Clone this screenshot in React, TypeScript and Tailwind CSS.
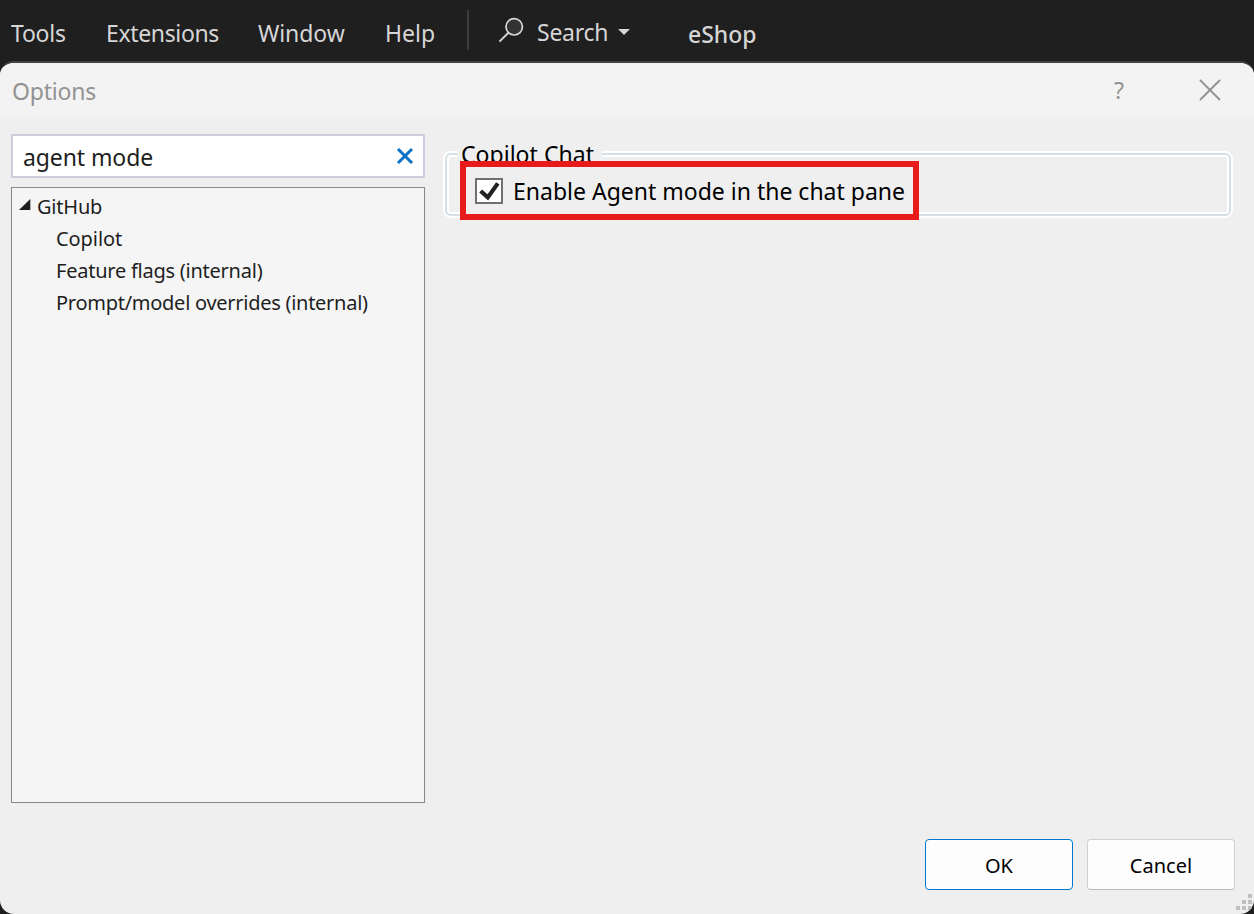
import { useState } from "react";

function SearchIcon() {
  return (
    <svg className="mt-[17px] ml-[30px] h-[26px] w-[26px] shrink-0" viewBox="0 0 26 26" fill="none">
      <circle cx="15.2" cy="9.8" r="8.2" fill="#333333" stroke="#d8d8d8" strokeWidth="1.7" />
      <path d="M9.4 15.8 L0.4 24.6" stroke="#d8d8d8" strokeWidth="1.9" />
    </svg>
  );
}

function MenuBar() {
  return (
    <header className="flex h-[61px] shrink-0 items-start whitespace-nowrap pl-[11px] text-[23px] leading-[32px] text-[#d6d6d6]">
      <span className="mt-[17px] w-[95px] tracking-[-0.24px]">Tools</span>
      <span className="mt-[17px] w-[152px] tracking-[-0.35px]">Extensions</span>
      <span className="mt-[17px] w-[127px] tracking-[-0.1px]">Window</span>
      <span className="mt-[17px] w-[82px] tracking-[0.05px]">Help</span>
      <span className="mt-[10px] h-[40px] w-[2px] bg-[#3d3d3d]" />
      <SearchIcon />
      <span className="mt-[16px] ml-[12px] w-[81px] tracking-[-0.25px]">Search</span>
      <svg className="mt-[29px] h-[6px] w-[12px]" viewBox="0 0 12 6">
        <path d="M0 0 H12 L6 6 Z" fill="#d6d6d6" />
      </svg>
      <span className="mt-[18px] ml-[58px] font-medium">eShop</span>
    </header>
  );
}

function TitleBar() {
  return (
    <div className="flex h-[56px] shrink-0 items-start bg-[#f3f3f3] pl-[12px] text-[23px] leading-[32px] text-[#929292]">
      <h1 className="mt-[12px] w-[1101px] tracking-[-0.2px]">Options</h1>
      <button className="mt-[11px] w-[12px] text-left" aria-label="Help">
        <span className="pl-px">?</span>
      </button>
      <button className="mt-[16px] ml-[74px]" aria-label="Close">
        <svg className="h-[22px] w-[22px]" viewBox="0 0 22 22" fill="none">
          <path d="M1 1 L21 21 M21 1 L1 21" stroke="#929292" strokeWidth="1.8" />
        </svg>
      </button>
    </div>
  );
}

function Sidebar() {
  return (
    <aside className="w-[414px] shrink-0 text-[#1e1e1e]">
      <div className="flex h-[44px] items-start justify-between border-2 border-[#ccccdc] bg-white pt-[5px] pl-[10px] pr-[9px]">
        <span className="text-[23px] leading-[32px] tracking-[-0.1px]">agent mode</span>
        <svg className="mt-[6px] h-[18px] w-[18px]" viewBox="0 0 18 18" fill="none">
          <path d="M2 2 L16 16 M16 2 L2 16" stroke="#0b71c7" strokeWidth="3" />
        </svg>
      </div>
      <div className="mt-[9px] h-[616px] border border-[#838991] bg-[#f5f5f5] pt-[3px] text-[20px] leading-[32px] whitespace-nowrap">
        <div className="flex pl-[7px]">
          <svg className="mt-[8px] mr-[6px] h-[11px] w-[12px]" viewBox="0 0 12 11">
            <path d="M11.3 0 V11 H0 Z" fill="#1e1e1e" />
          </svg>
          <span className="tracking-[-0.22px]">GitHub</span>
        </div>
        <div className="pl-[44px] tracking-[-0.08px]">Copilot</div>
        <div className="pl-[44px] tracking-[-0.24px]">Feature flags (internal)</div>
        <div className="pl-[44px] tracking-[-0.27px]">Prompt/model overrides (internal)</div>
      </div>
    </aside>
  );
}

function OptionsGroup() {
  const [enabled, setEnabled] = useState(true);
  return (
    <section className="relative mt-[17px] ml-[18px] h-[67px] w-[790px] rounded-[8px] border-2 border-white">
      <div className="h-full rounded-[6px] border-2 border-[#d5dfe5]">
        <div className="h-full rounded-[4px] border-2 border-white" />
      </div>
      <h2 className="absolute top-[-15px] left-[12px] h-[32px] w-[145px] bg-[#efefef] pl-[4px] text-[23px] leading-[32px] tracking-[0.03px] whitespace-nowrap text-black">
        Copilot Chat
      </h2>
      <label className="absolute top-[8px] left-[15px] flex h-[59px] w-[459px] items-start border-6 border-[#e81b1b] bg-[#efefef] text-[23px] leading-[32px] whitespace-nowrap text-black">
        <input
          type="checkbox"
          className="peer sr-only"
          checked={enabled}
          onChange={(e) => setEnabled(e.target.checked)}
        />
        <span className="mt-[11px] ml-[9px] h-[26px] w-[28px] shrink-0 border-2 border-[#707070] bg-white">
          {enabled && (
            <svg className="h-[22px] w-[24px]" viewBox="0 0 24 22" fill="none">
              <path d="M3.6 11 L10.8 17.4 L20.8 3.4" stroke="#212121" strokeWidth="4.2" />
            </svg>
          )}
        </span>
        <span className="mt-[8px] ml-[9px] pl-px">Enable Agent mode in the chat pane</span>
      </label>
    </section>
  );
}

function ResizeGrip() {
  return (
    <svg className="absolute right-[2px] bottom-[4px] h-[16px] w-[16px]" viewBox="0 0 16 16" fill="#bfbfbf">
      <path d="M12 0h4v4h-4z M6 6h4v4h-4z M12 6h4v4h-4z M0 12h4v4h-4z M6 12h4v4h-4z M12 12h4v4h-4z" />
    </svg>
  );
}

export default function App() {
  return (
    <div className="flex h-[914px] w-[1254px] flex-col overflow-hidden bg-[#1f1f1f] font-['Noto_Sans',sans-serif]">
      <MenuBar />
      <div className="flex flex-1 flex-col overflow-hidden rounded-[14px] border-t-2 border-[#444242] bg-[#efefef]">
        <TitleBar />
        <div className="flex h-[684px] pt-[15px] pl-[11px]">
          <Sidebar />
          <OptionsGroup />
        </div>
        <footer className="relative flex flex-1 gap-[14px] pt-[36px] pl-[925px] text-[20px] leading-[32px] text-black">
          <button className="h-[51px] w-[148px] rounded-[4px] border border-[#0078d4] bg-[#fdfdfd] pt-[2px] tracking-[0.1px]">
            OK
          </button>
          <button className="h-[51px] w-[148px] rounded-[4px] border border-[#d0d0d0] border-b-[#bababa] bg-[#fdfdfd] pt-[2px]">
            Cancel
          </button>
          <ResizeGrip />
        </footer>
      </div>
    </div>
  );
}
